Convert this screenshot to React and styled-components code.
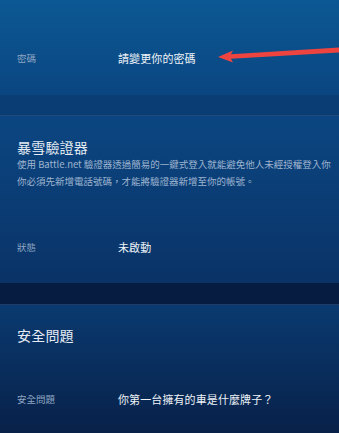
import styled, { createGlobalStyle } from 'styled-components';

const GlobalStyle = createGlobalStyle`
  html, body {
    margin: 0;
    padding: 0;
    background: #071d40;
  }
  body {
    font-family: 'Noto Sans CJK TC', 'Noto Sans', sans-serif;
    overflow: hidden;
  }
`;

const Page = styled.div`
  width: 339px;
  height: 433px;
  display: flex;
  flex-direction: column;
  overflow: hidden;
  position: relative;
`;

const Panel = styled.section`
  height: ${(props) => props.height}px;
  flex-shrink: 0;
  padding: ${(props) => props.padTop}px 0 0 17px;
  box-sizing: border-box;
  background: linear-gradient(to bottom, ${(props) => props.from}, ${(props) => props.to});
  border-top: ${(props) => (props.line ? '1px solid rgba(140, 180, 230, 0.18)' : 'none')};
  position: relative;
  overflow: hidden;
`;

const Gap = styled.div`
  height: ${(props) => props.height}px;
  flex-shrink: 0;
  background: ${(props) => props.color};
`;

const Title = styled.h2`
  margin: 0;
  height: 18px;
  line-height: 18px;
  font-size: 14px;
  font-weight: 400;
  color: #e4ebf3;
  letter-spacing: 0.2px;
`;

const Desc = styled.p`
  margin: 0;
  height: 17px;
  line-height: 17px;
  font-size: 9.5px;
  color: #9fb4cf;
  white-space: nowrap;
`;

const Row = styled.div`
  display: flex;
  align-items: center;
  height: 20px;
  margin-top: ${(props) => props.gap || 0}px;
`;

const Label = styled.span`
  width: 101px;
  flex-shrink: 0;
  font-size: 9.5px;
  color: #8ea5c2;
`;

const Value = styled.span`
  font-size: 11px;
  color: #eef3f8;
  letter-spacing: 0.1px;
`;

const Arrow = styled.svg`
  position: absolute;
  left: 0;
  top: 0;
  pointer-events: none;
`;

function App() {
  return (
    <>
      <GlobalStyle />
      <Page>
        <Panel height={95} padTop={48} from="#0c5894" to="#0a4681">
          <Row>
            <Label>密碼</Label>
            <Value>請變更你的密碼</Value>
          </Row>
          <Arrow width="339" height="95" viewBox="0 0 339 95">
            <polygon
              points="218,57 233,50.5 231,54.2 339,47.5 339,52.5 231,58.8 233,62.5"
              fill="#ee4440"
            />
          </Arrow>
        </Panel>
        <Gap height={20} color="#093d74" />
        <Panel height={168} padTop={22} from="#0b4682" to="#0a3367" line>
          <Title>暴雪驗證器</Title>
          <Desc>使用 Battle.net 驗證器透過簡易的一鍵式登入就能避免他人未經授權登入你</Desc>
          <Desc>你必須先新增電話號碼，才能將驗證器新增至你的帳號。</Desc>
          <Row gap={47}>
            <Label>狀態</Label>
            <Value>未啟動</Value>
          </Row>
        </Panel>
        <Gap height={21} color="#061c40" />
        <Panel height={129} padTop={21} from="#0a3a70" to="#082149" line>
          <Title>安全問題</Title>
          <Row gap={45}>
            <Label>安全問題</Label>
            <Value>你第一台擁有的車是什麼牌子？</Value>
          </Row>
        </Panel>
      </Page>
    </>
  );
}

export default App;
